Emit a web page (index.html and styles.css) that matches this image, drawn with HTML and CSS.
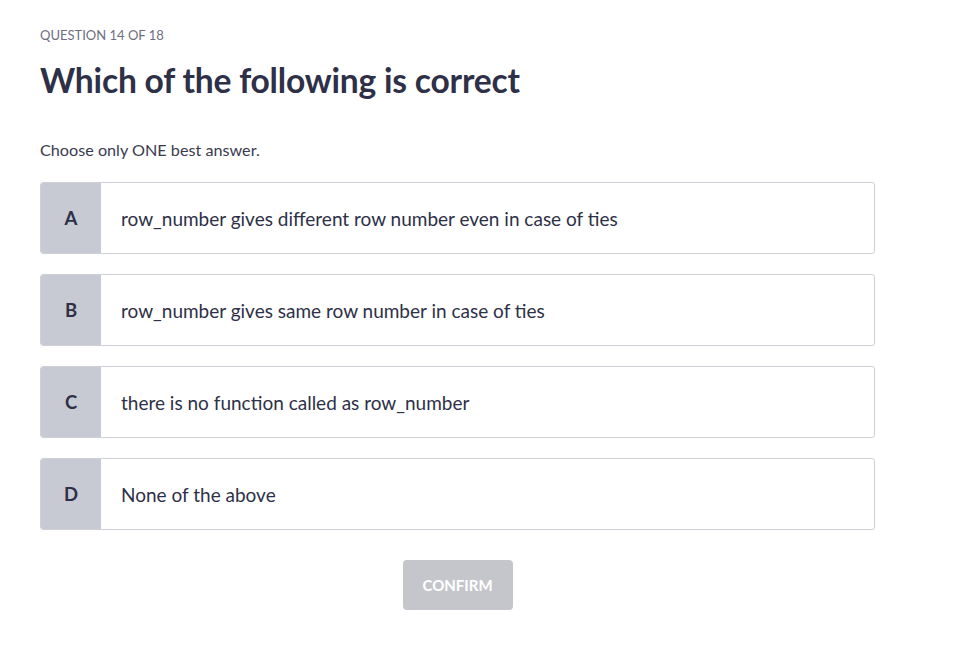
FILE: index.html
```html
<!DOCTYPE html>
<html lang="en">
<head>
<meta charset="utf-8">
<title>Question 14 of 18</title>
<link rel="stylesheet" href="styles.css">
</head>
<body>
<main class="quiz">
  <div class="counter">QUESTION 14 OF 18</div>
  <h1 class="title">Which of the following is correct</h1>
  <p class="hint">Choose only ONE best answer.</p>
  <div class="options">
    <div class="option"><div class="letter">A</div><div class="text">row_number gives different row number even in case of ties</div></div>
    <div class="option"><div class="letter">B</div><div class="text">row_number gives same row number in case of ties</div></div>
    <div class="option"><div class="letter">C</div><div class="text">there is no function called as row_number</div></div>
    <div class="option"><div class="letter">D</div><div class="text">None of the above</div></div>
  </div>
  <div class="actions"><button class="confirm" type="button">CONFIRM</button></div>
</main>
</body>
</html>
```
FILE: styles.css
```css
* { box-sizing: border-box; }
html, body { margin: 0; padding: 0; background: #fff; }
body {
  font-family: "Lato", "Liberation Sans", sans-serif;
  color: #2e3047;
}
.quiz {
  width: 835px;
  margin-left: 40px;
  padding-top: 27px;
}
.counter {
  font-size: 13px;
  color: #6e6e7e;
  line-height: 16px;
}
.title {
  margin: 17px 0 0;
  font-size: 33.6px;
  font-weight: 700;
  line-height: 40px;
  letter-spacing: -0.2px;
}
.hint {
  margin: 40px 0 0;
  font-size: 16.2px;
  line-height: 20px;
  color: #3a3b50;
}
.options {
  margin-top: 22px;
  display: flex;
  flex-direction: column;
  gap: 20px;
}
.option {
  display: flex;
  height: 72px;
  border: 1px solid #cfd0d6;
  border-radius: 3px;
  overflow: hidden;
  background: #fff;
}
.letter {
  width: 60px;
  flex: none;
  background: #c8cad3;
  display: flex;
  align-items: center;
  justify-content: center;
  font-size: 18.5px;
  font-weight: 700;
  color: #2e3047;
}
.text {
  display: flex;
  align-items: center;
  padding-left: 20px;
  font-size: 19px;
  color: #2e3047;
}
.actions {
  display: flex;
  justify-content: center;
  margin-top: 30px;
}
.confirm {
  width: 110px;
  height: 50px;
  border: 0;
  border-radius: 4px;
  background: #c5c6cc;
  color: #fff;
  font-family: inherit;
  font-size: 15px;
  font-weight: 700;
}
```
